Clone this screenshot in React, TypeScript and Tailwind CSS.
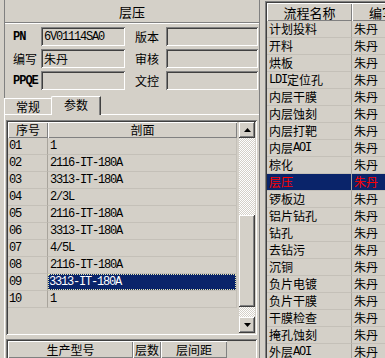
import React from "react";

const RAISED =
  "shadow-[inset_-1px_-1px_#404040,inset_1px_1px_#ffffff,inset_-2px_-2px_#808080,inset_2px_2px_#d4d0c8]";
const SUNKEN =
  "shadow-[inset_1px_1px_#808080,inset_-1px_-1px_#ffffff,inset_2px_2px_#404040,inset_-2px_-2px_#d4d0c8]";
const HDR = "shadow-[inset_1px_1px_#ffffff,inset_-1px_-1px_#808080]";
const CHECKER =
  "bg-[repeating-conic-gradient(#ffffff_0%_25%,#d4d0c8_0%_50%)] bg-size-[2px_2px]";

function Txt({ s, big, bold }: { s: string; big?: boolean; bold?: boolean }) {
  const parts = s.match(/[\x00-\x7F]+|[^\x00-\x7F]+/g) ?? [];
  return (
    <>
      {parts.map((p, i) =>
        /^[\x00-\x7F]+$/.test(p) ? (
          <span
            key={i}
            className={
              bold
                ? "font-['Liberation_Mono',monospace] text-[12px] tracking-[-1px] font-bold"
                : "font-['Liberation_Mono',monospace] text-[12px] tracking-[-1.2px]"
            }
          >
            {p}
          </span>
        ) : (
          <span
            key={i}
            className={
              big
                ? "font-['Noto_Sans_CJK_SC',sans-serif] text-[13px]"
                : "font-['Noto_Sans_CJK_SC',sans-serif] text-[12px]"
            }
          >
            {p}
          </span>
        )
      )}
    </>
  );
}

function Arrow({ up }: { up?: boolean }) {
  return (
    <svg width="7" height="4" viewBox="0 0 7 4" className="block">
      {up ? <path d="M3.5 0 L7 4 L0 4 Z" fill="#000" /> : <path d="M0 0 L7 0 L3.5 4 Z" fill="#000" />}
    </svg>
  );
}

function Field({ label, value, lw, iw, bold }: { label: string; value?: string; lw: string; iw: string; bold?: boolean }) {
  return (
    <>
      <div className={`${lw} h-full flex items-center`}>
        <Txt s={label} bold={bold} />
      </div>
      <div className={`${iw} h-full ${SUNKEN} flex items-center pl-[3px] whitespace-nowrap overflow-hidden`}>
        {value ? <Txt s={value} /> : null}
      </div>
    </>
  );
}

const sections = [
  ["01", "1"],
  ["02", "2116-IT-180A"],
  ["03", "3313-IT-180A"],
  ["04", "2/3L"],
  ["05", "2116-IT-180A"],
  ["06", "3313-IT-180A"],
  ["07", "4/5L"],
  ["08", "2116-IT-180A"],
  ["09", "3313-IT-180A"],
  ["10", "1"],
];

const flows = [
  "计划投料",
  "开料",
  "烘板",
  "LDI定位孔",
  "内层干膜",
  "内层蚀刻",
  "内层打靶",
  "内层AOI",
  "棕化",
  "层压",
  "锣板边",
  "铝片钻孔",
  "钻孔",
  "去钻污",
  "沉铜",
  "负片电镀",
  "负片干膜",
  "干膜检查",
  "掩孔蚀刻",
  "外层AOI",
];

export default function App() {
  return (
    <div className="w-[385px] h-[358px] bg-[#d4d0c8] overflow-hidden flex leading-none text-black select-none">
      {/* Left panel */}
      <div className="w-[260px] h-full pl-[4px] shrink-0">
        <div className="h-full flex flex-col border-l border-l-[#808080] border-r border-r-[#808080]">
          <div className="h-[23px] shrink-0 flex items-center justify-center border-b border-b-[#808080]">
            <Txt s="层压" big />
          </div>
          <div className="h-px bg-white shrink-0" />
          <div className="pt-[3px] flex flex-col gap-[3px] shrink-0">
            <div className="h-[19px] flex pl-[8px]">
              <Field label="PN" value="6V01114SA0" lw="w-[28px]" iw="w-[84px]" bold />
              <div className="w-[10px]" />
              <Field label="版本" lw="w-[31px]" iw="w-[92px]" />
            </div>
            <div className="h-[19px] flex pl-[8px]">
              <Field label="编写" value="朱丹" lw="w-[28px]" iw="w-[84px]" />
              <div className="w-[10px]" />
              <Field label="审核" lw="w-[31px]" iw="w-[92px]" />
            </div>
            <div className="h-[19px] flex pl-[8px]">
              <Field label="PPQE" lw="w-[28px]" iw="w-[84px]" bold />
              <div className="w-[10px]" />
              <Field label="文控" lw="w-[31px]" iw="w-[92px]" />
            </div>
          </div>
          {/* Tabs */}
          <div className="mt-[6px] h-[18px] flex items-end shrink-0 -ml-px">
            <div className="w-[47px] h-[16px] border-t border-l border-white flex items-center justify-center">
              <Txt s="常规" />
            </div>
            <div className="relative z-10 w-[50px] h-[19px] -mb-px bg-[#d4d0c8] border-t border-l border-white border-r border-r-[#404040] shadow-[inset_-1px_0_#808080] rounded-tl-[2px] flex items-center justify-center pb-[2px]">
              <Txt s="参数" />
            </div>
          </div>
          {/* Tab panel */}
          <div className="flex-1 border-t border-l border-white -ml-px pt-[5px] pl-px">
            <div className={`w-[251px] h-[215px] ${SUNKEN} p-[2px] flex`}>
              <div className="w-[231px] flex flex-col">
                <div className="h-[16px] flex shrink-0">
                  <div className={`w-[40px] h-full ${HDR} flex items-center justify-center`}>
                    <Txt s="序号" />
                  </div>
                  <div className={`w-[189px] h-full ${HDR} flex items-center justify-center`}>
                    <Txt s="剖面" />
                  </div>
                </div>
                {sections.map(([n, v]) => (
                  <div key={n} className="h-[17px] flex shrink-0">
                    <div className="w-[40px] h-full border-r border-b border-r-[#a8a49c] border-b-[#c4c0b8] flex items-center pl-px">
                      <Txt s={n} />
                    </div>
                    {n === "09" ? (
                      <div className="w-[189px] h-full border-r border-b border-[#c4c0b8] flex items-center">
                        <div className="w-full h-full bg-[#0a246a] text-white flex items-center pl-[1px] outline-1 outline-dotted outline-[#e8e8b0] -outline-offset-1">
                          <Txt s={v} />
                        </div>
                      </div>
                    ) : (
                      <div className="w-[189px] h-full border-r border-b border-[#c4c0b8] flex items-center pl-[2px]">
                        <Txt s={v} />
                      </div>
                    )}
                  </div>
                ))}
              </div>
              <div className="w-[16px] flex flex-col">
                <div className={`h-[16px] shrink-0 ${RAISED} bg-[#d4d0c8] flex items-center justify-center`}>
                  <Arrow up />
                </div>
                <div className={`h-[77px] shrink-0 ${CHECKER}`} />
                <div className={`h-[92px] shrink-0 ${RAISED} bg-[#d4d0c8]`} />
                <div className={`flex-1 ${CHECKER}`} />
                <div className={`h-[16px] shrink-0 ${RAISED} bg-[#d4d0c8] flex items-center justify-center`}>
                  <Arrow />
                </div>
              </div>
            </div>
            <div className={`mt-[4px] w-[251px] h-[24px] ${SUNKEN} p-[2px] flex`}>
              <div className={`w-[125px] h-[17px] ${HDR} flex items-center justify-center`}>
                <Txt s="生产型号" />
              </div>
              <div className={`w-[28px] h-[17px] ${HDR} flex items-center justify-center`}>
                <Txt s="层数" />
              </div>
              <div className={`w-[66px] h-[17px] ${HDR} flex items-center justify-center`}>
                <Txt s="层间距" />
              </div>
            </div>
          </div>
        </div>
      </div>
      {/* Right grid */}
      <div className="flex-1 pl-[5px] pt-px min-w-0">
        <div className={`w-[160px] h-[400px] ${SUNKEN} p-[2px] flex flex-col`}>
          <div className="h-[18px] flex shrink-0">
            <div className={`w-[85px] shrink-0 h-full ${HDR} flex items-center justify-center`}>
              <Txt s="流程名称" big />
            </div>
            <div className={`w-[60px] shrink-0 h-full ${HDR} flex items-center justify-center`}>
              <Txt s="编写" big />
            </div>
          </div>
          {flows.map((f) => {
            const sel = f === "层压";
            return (
              <div
                key={f}
                className={
                  sel
                    ? "h-[17px] flex shrink-0 bg-[#0a246a] text-[#ff0000]"
                    : "h-[17px] flex shrink-0"
                }
              >
                <div className="w-[85px] shrink-0 h-full border-r border-b border-r-[#a8a49c] border-b-[#c4c0b8] flex items-center pl-[2px] whitespace-nowrap">
                  <Txt s={f} />
                </div>
                <div className="w-[60px] shrink-0 h-full border-r border-b border-[#c4c0b8] flex items-center pl-[2px] whitespace-nowrap">
                  <Txt s="朱丹" />
                </div>
              </div>
            );
          })}
        </div>
      </div>
    </div>
  );
}
